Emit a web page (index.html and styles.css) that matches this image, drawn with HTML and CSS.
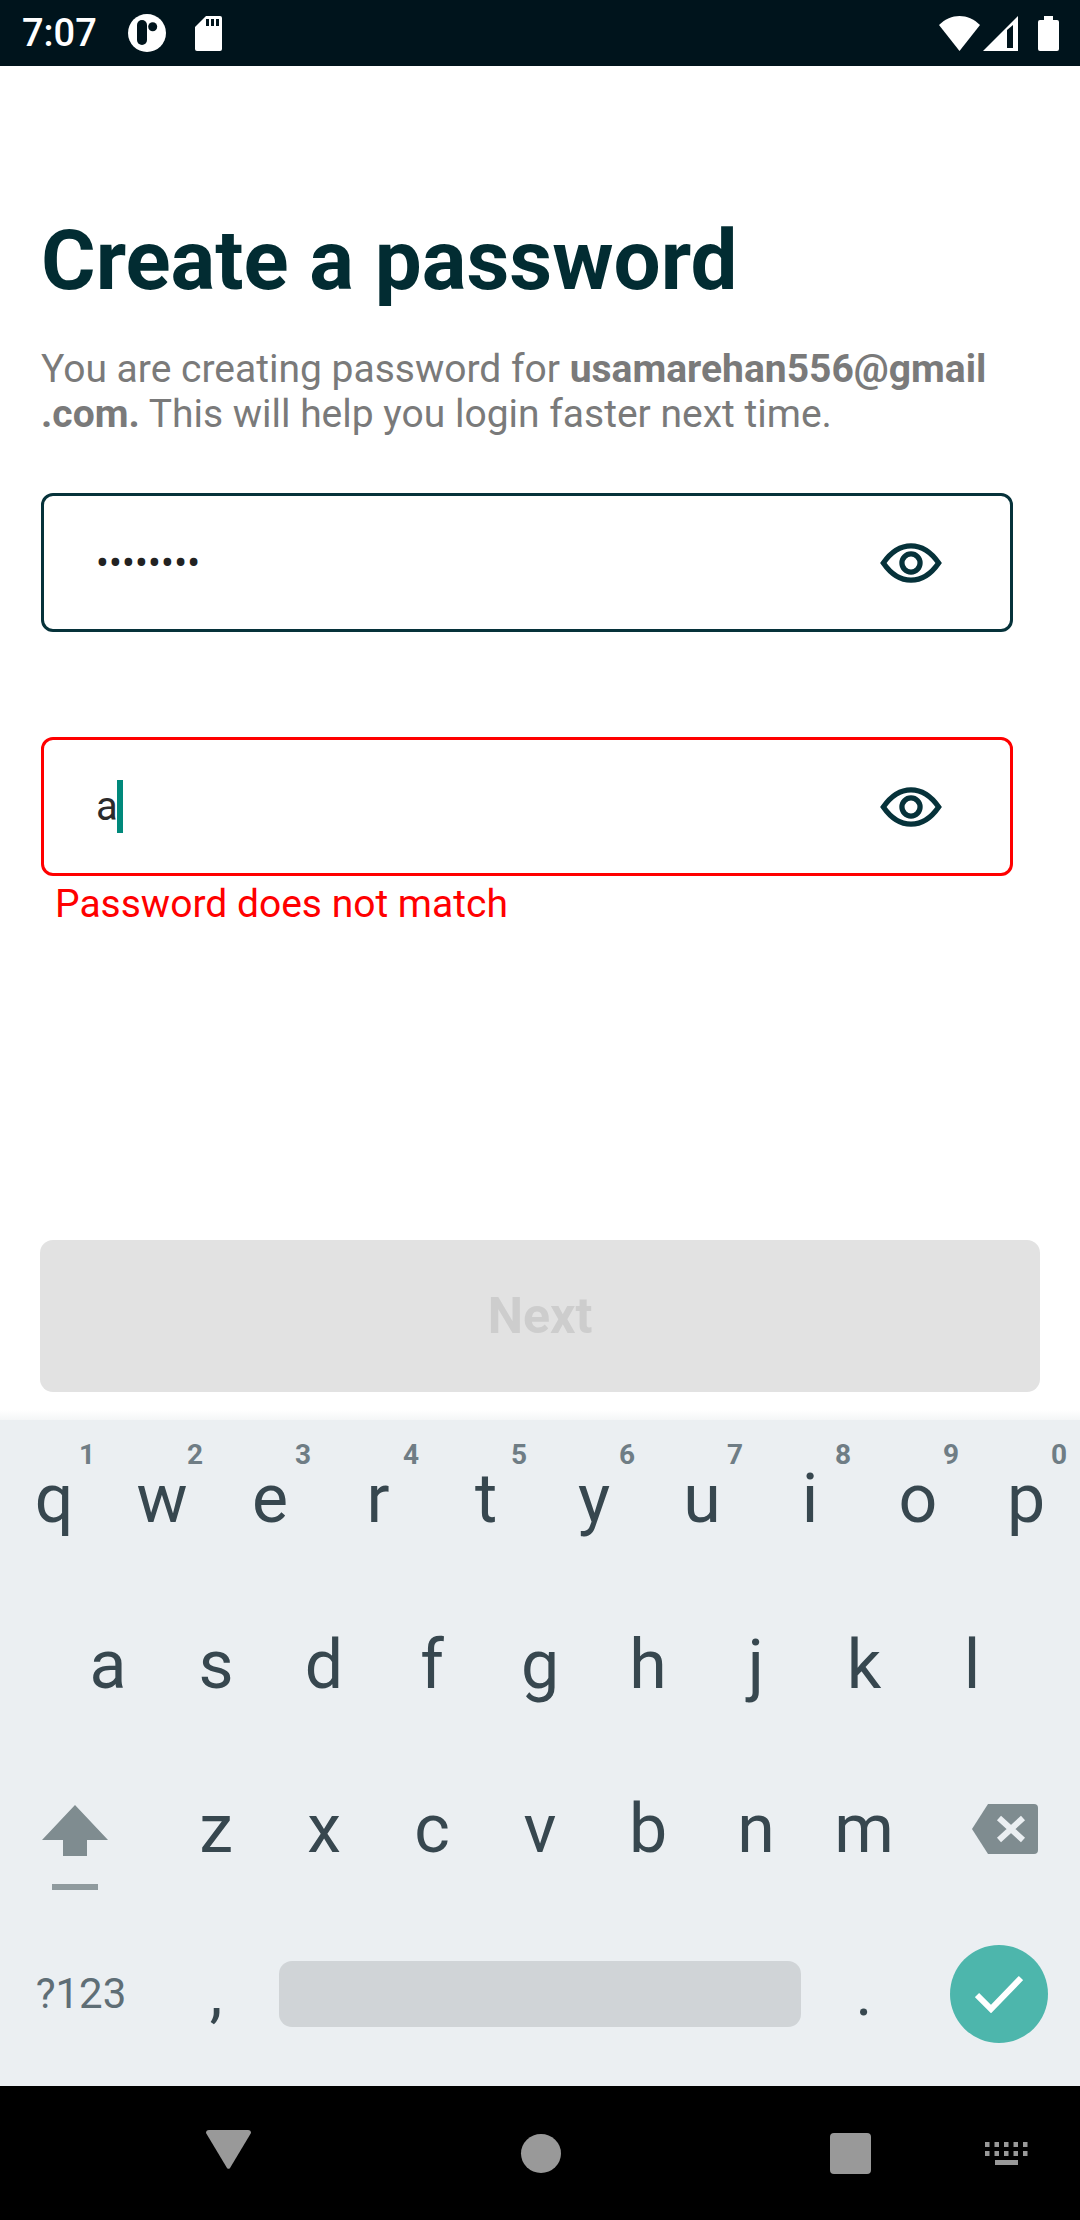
FILE: index.html
```html
<!doctype html>
<html>
<head>
<meta charset="utf-8">
<title>Create a password</title>
<link rel="stylesheet" href="styles.css">
</head>
<body>
<div class="screen">
	<div class="status">
		<span class="time">7:07</span>
		<svg class="st-app" width="38" height="38" viewBox="0 0 38 38">
			<circle cx="19" cy="19" r="19" fill="#fff"/>
			<rect x="9" y="6" width="10" height="25" rx="5" fill="#00141c"/>
			<circle cx="24.700" cy="12.700" r="4.500" fill="#00141c"/>
		</svg>
		<svg class="st-sd" width="27" height="35" viewBox="0 0 27 35">
			<path d="M11 0H25a2 2 0 0 1 2 2V33a2 2 0 0 1-2 2H2a2 2 0 0 1-2-2V11Z" fill="#fff"/>
			<path d="M11 3h3v7h-3zM16 3h3v7h-3zM21 3h3v7h-3z" fill="#00141c"/>
		</svg>
		<span class="status-space"></span>
		<svg class="st-wifi" width="41" height="35" viewBox="0 0 41 35">
			<path d="M0 9C12-3 29-3 41 9L20.500 35Z" fill="#fff"/>
		</svg>
		<svg class="st-signal" width="35" height="35" viewBox="0 0 35 35">
			<path d="M0 35L35 0V35Z" fill="#fff"/>
			<path d="M24 14L30 9V32H24Z" fill="#00141c"/>
		</svg>
		<svg class="st-batt" width="21" height="35" viewBox="0 0 21 35">
			<path d="M6 0H15V4H19a2 2 0 0 1 2 2V33a2 2 0 0 1-2 2H2a2 2 0 0 1-2-2V6a2 2 0 0 1 2-2H6Z" fill="#fff"/>
		</svg>
	</div>

	<div class="main">
		<h1>Create a password</h1>
		<p class="intro">You are creating password for <b>usamarehan556@gmail<br>.com.</b> This will help you login faster next time.</p>

		<div class="field">
			<span class="dots">••••••••</span>
			<svg class="eye" width="62" height="42" viewBox="0 0 64 44">
				<path d="M3 22C12 9 22 4 32 4C42 4 52 9 61 22C52 35 42 40 32 40C22 40 12 35 3 22Z" fill="none" stroke="#06323a" stroke-width="5.500"/>
				<circle cx="32" cy="22" r="9.500" fill="none" stroke="#06323a" stroke-width="5.500"/>
			</svg>
		</div>

		<div class="field field-err">
			<span class="typed">a</span><span class="caret"></span>
			<svg class="eye" width="62" height="42" viewBox="0 0 64 44">
				<path d="M3 22C12 9 22 4 32 4C42 4 52 9 61 22C52 35 42 40 32 40C22 40 12 35 3 22Z" fill="none" stroke="#06323a" stroke-width="5.500"/>
				<circle cx="32" cy="22" r="9.500" fill="none" stroke="#06323a" stroke-width="5.500"/>
			</svg>
		</div>
		<div class="err">Password does not match</div>

		<div class="next">Next</div>
	</div>

	<div class="kb">
		<div class="row row1">
			<span class="key">q<i>1</i></span>
			<span class="key">w<i>2</i></span>
			<span class="key">e<i>3</i></span>
			<span class="key">r<i>4</i></span>
			<span class="key">t<i>5</i></span>
			<span class="key">y<i>6</i></span>
			<span class="key">u<i>7</i></span>
			<span class="key">i<i>8</i></span>
			<span class="key">o<i>9</i></span>
			<span class="key">p<i>0</i></span>
		</div>
		<div class="row row2">
			<span class="key">a</span>
			<span class="key">s</span>
			<span class="key">d</span>
			<span class="key">f</span>
			<span class="key">g</span>
			<span class="key">h</span>
			<span class="key">j</span>
			<span class="key">k</span>
			<span class="key">l</span>
		</div>
		<div class="row">
			<span class="key wide">
				<svg class="shift" width="66" height="85" viewBox="0 0 66 85">
					<path d="M33 0L66 35H45V51H21V35H0Z" fill="#7f8c90"/>
					<rect x="10" y="79" width="46" height="6" fill="#8f9a9e"/>
				</svg>
			</span>
			<span class="key">z</span>
			<span class="key">x</span>
			<span class="key">c</span>
			<span class="key">v</span>
			<span class="key">b</span>
			<span class="key">n</span>
			<span class="key">m</span>
			<span class="key wide">
				<svg class="del" width="66" height="50" viewBox="0 0 66 50">
					<path d="M16 0H62a4 4 0 0 1 4 4V46a4 4 0 0 1-4 4H16L0 25Z" fill="#7f8c90"/>
					<path d="M27 14L51 36M51 14L27 36" stroke="#ebeff2" stroke-width="6"/>
				</svg>
			</span>
		</div>
		<div class="row">
			<span class="key wide sym">?123</span>
			<span class="key punct">,</span>
			<span class="key space"><span class="bar"></span></span>
			<span class="key punct">.</span>
			<span class="key wide">
				<span class="enter">
					<svg width="48" height="38" viewBox="0 0 48 38">
						<path d="M2 20L16 34L46 3" fill="none" stroke="#fff" stroke-width="6"/>
					</svg>
				</span>
			</span>
		</div>
	</div>

	<div class="nav">
		<svg class="nav-back" width="45" height="39" viewBox="0 0 45 39">
			<path d="M3 0H42a3 3 0 0 1 3 3L24 38a2 2 0 0 1-3 0L0 3a3 3 0 0 1 3-3Z" fill="#999"/>
		</svg>
		<span class="nav-home"></span>
		<span class="nav-recent"></span>
		<svg class="nav-kb" width="43" height="23" viewBox="0 0 43 23">
			<path d="M0 0h4.500v5h-4.500zM9.500 0h4.500v5h-4.500zM19 0h4.500v5h-4.500zM28.500 0h4.500v5h-4.500zM38 0h4.500v5h-4.500z" fill="#999"/>
			<path d="M0 9h4.500v5h-4.500zM9.500 9h4.500v5h-4.500zM19 9h4.500v5h-4.500zM28.500 9h4.500v5h-4.500zM38 9h4.500v5h-4.500z" fill="#999"/>
			<rect x="10" y="18" width="23" height="5" fill="#999"/>
		</svg>
	</div>
</div>
</body>
</html>
```

FILE: styles.css
```css
*{ margin:0; padding:0; box-sizing:border-box;}
body{ width:1080px; height:2220px; overflow:hidden; background:#fff; font-family:Roboto,"Liberation Sans",sans-serif;}
.screen{ height:2220px; display:flex; flex-direction:column;}

.status{ height:66px; background:#00141c; display:flex; align-items:center; padding-left:22px; color:#fff; flex:none;}
.time{ font-size:38px; font-weight:500; width:106px;}
.st-sd{ margin-left:29px;}
.status-space{ flex:1;}
.st-signal{ margin-left:3px;}
.st-batt{ margin-left:20px; margin-right:21px;}

.main{ flex:1; padding:146px 0 0 41px; position:relative; display:flex; flex-direction:column;}
h1{ font-size:83.5px; line-height:98px; font-weight:700; color:#022c32;}
.intro{ font-size:39px; line-height:45px; color:#7a7a7a; margin-top:37px; width:1030px;}
.intro b{ font-weight:700;}

.field{ width:972px; height:139px; border:3px solid #06323a; border-radius:12px; margin-top:56px; display:flex; align-items:center; padding-left:52px; position:relative;}
.field-err{ border-color:#f00; margin-top:105px;}
.dots{ font-size:38px; color:#222; letter-spacing:.2px;}
.typed{ font-size:40px; color:#2b2b2b;}
.caret{ width:6px; height:53px; margin-left:-1px; background:#00897b;}
.eye{ position:absolute; right:68px; top:46px;}
.err{ font-size:39px; line-height:44px; color:#f00; margin:6px 0 0 14px;}

.next{ width:1000px; height:152px; margin:auto 0 28px -1px; background:#e2e2e2; border-radius:13px; display:flex; align-items:center; justify-content:center; font-size:50px; font-weight:700; color:#cdcdcd;}

.kb{ height:666px; flex:none; background:#ebeff2; padding-bottom:8px; position:relative; display:grid; grid-template-rows:repeat(4,1fr);}
.kb:before{ content:""; position:absolute; left:0; right:0; top:-10px; height:10px; background:linear-gradient(#fff,#f4f6f7);}
.row{ display:flex; align-items:center;}
.row2{ padding-left:54px;}
.key{ width:108px; height:100%; padding-bottom:4px; display:flex; align-items:center; justify-content:center; font-size:68px; color:#37474f; position:relative;}
.row1 .key{ padding-bottom:7px;}
.key i{ position:absolute; top:18px; left:79px; font-style:normal; font-size:28px; font-weight:700; color:#6f7d85;}
.wide{ width:162px;}
.shift{ margin:36px 12px 0 0;}
.del{ margin-left:12px;}
.sym{ font-size:42px; color:#5f6e76;}
.punct{ font-size:64px;}
.space{ width:540px;}
.bar{ width:522px; height:66px; background:#d0d4d7; border-radius:13px;}
.enter{ width:98px; height:98px; border-radius:50%; background:#4db6ac; display:flex; align-items:center; justify-content:center;}

.nav{ height:134px; flex:none; background:#000; display:flex; align-items:center; padding-left:206px;}
.nav-back{ margin-bottom:7px;}
.nav-home{ width:40px; height:39px; border-radius:50%; background:#999; margin-left:270px;}
.nav-recent{ width:41px; height:41px; border-radius:4px; background:#999; margin-left:269px;}
.nav-kb{ margin-left:114px;}
```
